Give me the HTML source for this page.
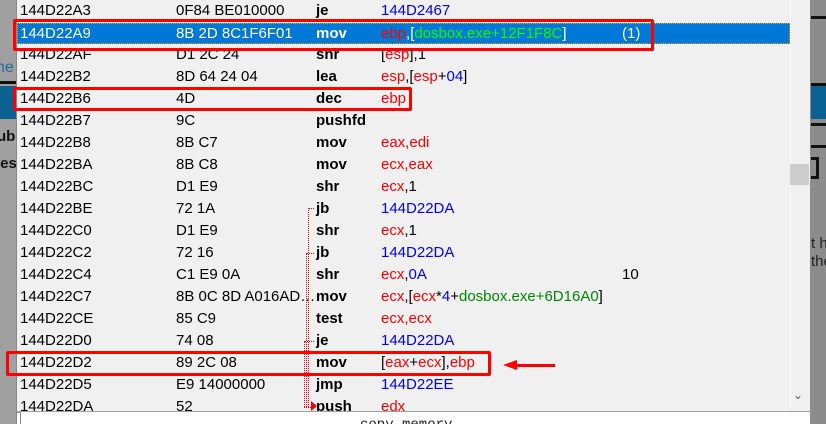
<!DOCTYPE html>
<html style="height:424px;overflow:hidden"><head><meta charset="utf-8"><style>
*{margin:0;padding:0;box-sizing:border-box}
body{width:826px;height:424px;overflow:hidden;position:relative;background:#f0f0f0;font-family:"Liberation Sans",Arial,sans-serif;font-size:15px}
.abs{position:absolute}
.row{position:absolute;left:17px;width:773px;height:22px;line-height:22px;color:#000;white-space:nowrap}
.row span{position:absolute;top:0}
.row span span{position:static}
.a{left:3px}.b{left:159px}.m{left:299px;font-weight:bold}.o{left:364px}.c{left:605px}
.r{color:#f00}.u{color:#00f}.g{color:#0a0}.k{color:#000}
.sel{background:#0078d7;color:#fff;outline:1px dotted #f90;outline-offset:-1px}
.box{position:absolute;border:3px solid #f00;border-radius:2px}
.dl{position:absolute;border-left:1px dotted #f00;width:0}
.dh{position:absolute;border-top:1px dotted #f00;height:0}
</style></head><body>
<div class="abs" style="left:0;top:0;width:17px;height:424px;background:#a0a0a0"></div>
<div class="abs" style="left:-4px;top:59px;color:#1a6fa0;font-size:16px">he</div>
<div class="abs" style="left:0;top:81px;width:17px;height:3px;background:#111"></div>
<div class="abs" style="left:0;top:86px;width:17px;height:33px;background:#0b6191"></div>
<div class="abs" style="left:-3px;top:128px;font-weight:bold;font-size:15px;color:#111">ub</div>
<div class="abs" style="left:-4px;top:155px;font-weight:bold;font-size:15px;color:#111">les</div>
<div class="abs" style="left:16px;top:0;width:1px;height:424px;background:#888"></div>
<div class="abs" style="left:810px;top:0;width:16px;height:424px;background:#8c8c8c"></div>
<div class="abs" style="left:811px;top:16px;width:15px;height:3px;background:#111"></div>
<div class="abs" style="left:811px;top:83px;width:15px;height:3px;background:#111"></div>
<div class="abs" style="left:811px;top:86px;width:15px;height:33px;background:#0b6191"></div>
<div class="abs" style="left:811px;top:123px;width:15px;height:3px;background:#111"></div>
<div class="abs" style="left:811px;top:145px;width:15px;height:3px;background:#111"></div>
<div class="abs" style="left:811px;top:157px;width:8px;height:22px;border:3px solid #111;border-left:none"></div>
<div class="abs" style="left:811px;top:235px;color:#222;font-size:15px;line-height:18px">t h<br>the</div>
<div class="abs" style="left:790px;top:0;width:20px;height:411px;background:#f0f0f0;border-left:1px solid #fff"></div>
<div class="abs" style="left:790px;top:164px;width:19px;height:21px;background:#cdcdcd"></div>
<div class="abs" style="left:793px;top:388px;color:#606060;font-size:12px">&#8964;</div>

<div class="row" style="top:0"><span class="a">144D22A3</span><span class="b">0F84 BE010000</span><span class="m">je</span><span class="o u">144D2467</span></div>
<div class="row sel" style="top:23px;height:21px;line-height:21px"><span class="a">144D22A9</span><span class="b">8B 2D 8C1F6F01</span><span class="m">mov</span><span class="o"><span class="r">ebp</span>,[<span style="color:#0f0">dosbox.exe+12F1F8C</span>]</span><span class="c">(1)</span></div>
<div class="row" style="top:44px"><span class="a">144D22AF</span><span class="b">D1 2C 24</span><span class="m">shr</span><span class="o">[<span class="r">esp</span>],1</span></div>
<div class="row" style="top:66px"><span class="a">144D22B2</span><span class="b">8D 64 24 04</span><span class="m">lea</span><span class="o"><span class="r">esp</span>,[<span class="r">esp</span>+<span class="u">04</span>]</span></div>
<div class="row" style="top:88px"><span class="a">144D22B6</span><span class="b">4D</span><span class="m">dec</span><span class="o r">ebp</span></div>
<div class="row" style="top:110px"><span class="a">144D22B7</span><span class="b">9C</span><span class="m">pushfd</span></div>
<div class="row" style="top:132px"><span class="a">144D22B8</span><span class="b">8B C7</span><span class="m">mov</span><span class="o r">eax,edi</span></div>
<div class="row" style="top:154px"><span class="a">144D22BA</span><span class="b">8B C8</span><span class="m">mov</span><span class="o r">ecx,eax</span></div>
<div class="row" style="top:176px"><span class="a">144D22BC</span><span class="b">D1 E9</span><span class="m">shr</span><span class="o"><span class="r">ecx</span>,1</span></div>
<div class="row" style="top:198px"><span class="a">144D22BE</span><span class="b">72 1A</span><span class="m">jb</span><span class="o u">144D22DA</span></div>
<div class="row" style="top:220px"><span class="a">144D22C0</span><span class="b">D1 E9</span><span class="m">shr</span><span class="o"><span class="r">ecx</span>,1</span></div>
<div class="row" style="top:242px"><span class="a">144D22C2</span><span class="b">72 16</span><span class="m">jb</span><span class="o u">144D22DA</span></div>
<div class="row" style="top:264px"><span class="a">144D22C4</span><span class="b">C1 E9 0A</span><span class="m">shr</span><span class="o"><span class="r">ecx</span>,<span class="u">0A</span></span><span class="c">10</span></div>
<div class="row" style="top:286px"><span class="a">144D22C7</span><span class="b" style="width:140px;overflow:hidden;text-overflow:ellipsis">8B 0C 8D A016AD00</span><span class="m">mov</span><span class="o"><span class="r">ecx</span>,[<span class="r">ecx</span>*<span class="u">4</span>+<span style="color:#080">dosbox.exe+6D16A0</span>]</span></div>
<div class="row" style="top:308px"><span class="a">144D22CE</span><span class="b">85 C9</span><span class="m">test</span><span class="o r">ecx,ecx</span></div>
<div class="row" style="top:330px"><span class="a">144D22D0</span><span class="b">74 08</span><span class="m">je</span><span class="o u">144D22DA</span></div>
<div class="row" style="top:352px"><span class="a">144D22D2</span><span class="b">89 2C 08</span><span class="m">mov</span><span class="o">[<span class="r">eax</span>+<span class="r">ecx</span>],<span class="r">ebp</span></span></div>
<div class="row" style="top:374px"><span class="a">144D22D5</span><span class="b">E9 14000000</span><span class="m">jmp</span><span class="o u">144D22EE</span></div>
<div class="row" style="top:396px"><span class="a">144D22DA</span><span class="b">52</span><span class="m">push</span><span class="o r">edx</span></div>

<div class="dl" style="left:308px;top:208px;height:199px"></div>
<div class="dh" style="left:308px;top:208px;width:6px"></div>
<div class="dl" style="left:306px;top:253px;height:154px"></div>
<div class="dh" style="left:306px;top:253px;width:8px"></div>
<div class="dl" style="left:304px;top:341px;height:66px"></div>
<div class="dh" style="left:304px;top:341px;width:10px"></div>
<div class="dh" style="left:304px;top:407px;width:7px"></div>
<div class="abs" style="left:311px;top:401px;width:0;height:0;border-left:6px solid #f00;border-top:5px solid transparent;border-bottom:5px solid transparent"></div>

<div class="abs" style="left:17px;top:411px;width:793px;height:13px;background:#fff;border-top:2px solid #a0a0a0"></div>
<div class="abs" style="left:20px;top:412px;width:790px;height:12px;background:#fff;border-left:1px solid #888"></div>
<div class="abs" style="left:360px;top:417px;font-family:'Liberation Mono',monospace;font-size:14px;color:#222">copy memory</div>

<div class="box" style="left:13px;top:19px;width:641px;height:32px"></div>
<div class="box" style="left:13px;top:87px;width:399px;height:24px"></div>
<div class="box" style="left:6px;top:351px;width:485px;height:25px"></div>
<div class="abs" style="left:515px;top:364px;width:40px;height:3px;background:#f00"></div>
<div class="abs" style="left:503px;top:360px;width:0;height:0;border-right:14px solid #f00;border-top:5px solid transparent;border-bottom:5px solid transparent"></div>
</body></html>
